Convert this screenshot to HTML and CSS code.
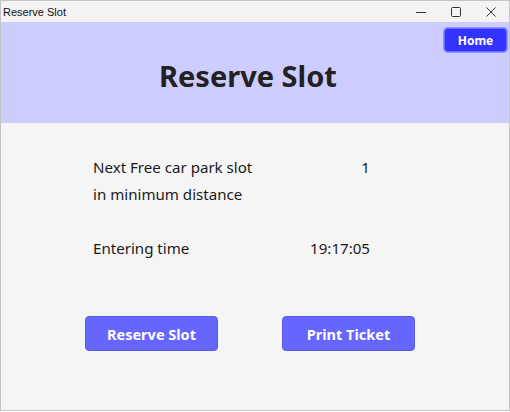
FILE: index.html
```html
<!DOCTYPE html>
<html>
<head>
<meta charset="utf-8">
<link rel="stylesheet" href="styles.css">
</head>
<body>
<div class="window">
  <div class="titlebar">
    <span class="title-text">Reserve Slot</span>
    <div class="controls">
      <svg class="ctl" width="12" height="12" viewBox="0 0 12 12"><path d="M1 6.5H11" stroke="#333" stroke-width="1"/></svg>
      <svg class="ctl" width="12" height="12" viewBox="0 0 12 12"><rect x="1.5" y="1.5" width="9" height="9" rx="1" fill="none" stroke="#333" stroke-width="1"/></svg>
      <svg class="ctl" width="12" height="12" viewBox="0 0 12 12"><path d="M1.5 1.5L10.5 10.5M10.5 1.5L1.5 10.5" stroke="#333" stroke-width="1"/></svg>
    </div>
  </div>
  <header class="header">
    <button class="home-btn">Home</button>
    <h1 class="heading">Reserve Slot</h1>
  </header>
  <main class="main">
    <div class="info">
      <div class="label">Next Free car park slot<br>in minimum distance</div>
      <div class="value">1</div>
      <div class="label">Entering time</div>
      <div class="value">19:17:05</div>
    </div>
    <div class="actions">
      <button class="action-btn">Reserve Slot</button>
      <button class="action-btn">Print Ticket</button>
    </div>
  </main>
</div>
</body>
</html>
```

FILE: styles.css
```css
* { box-sizing: border-box; }
html, body { margin: 0; padding: 0; }
body {
  width: 510px;
  height: 412px;
  overflow: hidden;
  font-family: "Noto Sans", "Open Sans", sans-serif;
  background: #ffffff;
}
.window {
  width: 510px;
  height: 411px;
  border: 1px solid #c4c4c4;
  display: flex;
  flex-direction: column;
  background: #f5f5f5;
}
.titlebar {
  height: 21px;
  background: #f3f3f3;
  display: flex;
  align-items: center;
  justify-content: space-between;
  padding-left: 2px;
}
.title-text {
  font-size: 11px;
  color: #111;
  font-family: "Liberation Sans", sans-serif;
}
.controls {
  display: flex;
  align-items: center;
  gap: 23px;
  padding-right: 12px;
}
.ctl { display: block; }
.header {
  position: relative;
  height: 101px;
  background: #ccccff;
  display: flex;
  align-items: center;
  justify-content: center;
}
.heading {
  margin: 0 14px 0 0;
  padding-top: 6px;
  font-size: 29px;
  font-weight: 700;
  color: #222;
}
.home-btn {
  position: absolute;
  top: 6px;
  right: 2px;
  width: 63px;
  height: 24px;
  background: #3333ff;
  color: #fff;
  border: 1px solid #6a6aff;
  box-shadow: 0 0 0 1px #8f8fff;
  border-radius: 4px;
  font-family: "Noto Sans", sans-serif;
  font-weight: 700;
  font-size: 12px;
  padding: 0;
}
.main {
  flex: 1;
  display: flex;
  flex-direction: column;
  padding-top: 31px;
}
.info {
  margin-left: 92px;
  width: 277px;
  display: grid;
  grid-template-columns: 1fr auto;
  row-gap: 27px;
  font-size: 15.1px;
  line-height: 27px;
  color: #1a1a1a;
}
.value { text-align: right; }
.actions {
  display: flex;
  gap: 64px;
  margin-left: 84px;
  margin-top: 54px;
}
.action-btn {
  width: 133px;
  height: 35px;
  background: #6666ff;
  color: #fff;
  border: 1px solid #5a5aee;
  border-radius: 4px;
  font-family: "Noto Sans", sans-serif;
  font-weight: 700;
  font-size: 14.5px;
  padding: 0;
}
```
